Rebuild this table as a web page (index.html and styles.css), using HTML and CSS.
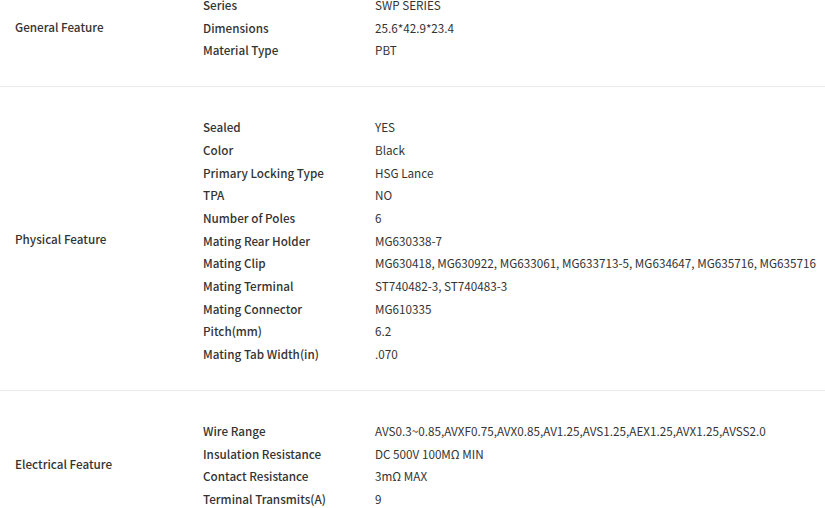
FILE: index.html
```html
<!DOCTYPE html>
<html lang="en">
<head>
    <meta charset="UTF-8">
    <meta name="viewport" content="width=device-width, initial-scale=1.0">
    <title>Product Specifications</title>
    <link rel="stylesheet" href="styles.css">
</head>
<body>
    <div class="specs">
        <div class="group">
            <div class="group-name">General Feature</div>
            <div class="rows">
                <div class="key">Series</div><div class="val">SWP SERIES</div>
                <div class="key">Dimensions</div><div class="val">25.6*42.9*23.4</div>
                <div class="key">Material Type</div><div class="val">PBT</div>
            </div>
        </div>

        <div class="group">
            <div class="group-name">Physical Feature</div>
            <div class="rows">
                <div class="key">Sealed</div><div class="val">YES</div>
                <div class="key">Color</div><div class="val">Black</div>
                <div class="key">Primary Locking Type</div><div class="val">HSG Lance</div>
                <div class="key">TPA</div><div class="val">NO</div>
                <div class="key">Number of Poles</div><div class="val">6</div>
                <div class="key">Mating Rear Holder</div><div class="val">MG630338-7</div>
                <div class="key">Mating Clip</div><div class="val">MG630418, MG630922, MG633061, MG633713-5, MG634647, MG635716, MG635716</div>
                <div class="key">Mating Terminal</div><div class="val">ST740482-3, ST740483-3</div>
                <div class="key">Mating Connector</div><div class="val">MG610335</div>
                <div class="key">Pitch(mm)</div><div class="val">6.2</div>
                <div class="key">Mating Tab Width(in)</div><div class="val">.070</div>
            </div>
        </div>

        <div class="group">
            <div class="group-name">Electrical Feature</div>
            <div class="rows">
                <div class="key">Wire Range</div><div class="val">AVS0.3~0.85,AVXF0.75,AVX0.85,AV1.25,AVS1.25,AEX1.25,AVX1.25,AVSS2.0</div>
                <div class="key">Insulation Resistance</div><div class="val">DC 500V 100MΩ MIN</div>
                <div class="key">Contact Resistance</div><div class="val">3mΩ MAX</div>
                <div class="key">Terminal Transmits(A)</div><div class="val">9</div>
            </div>
        </div>
    </div>
</body>
</html>
```

FILE: styles.css
```css
body {
    font-family: "Noto Sans CJK KR", "Noto Sans", sans-serif;
    font-size: 11.7px;
    margin: 0;
    color: #333;
    background: #fff;
}
.specs {
    margin-top: -35px;
}
.group {
    display: flex;
    align-items: center;
    padding: 29px 0 24px 15px;
    border-bottom: 1px solid #ebebeb;
}
.group-name {
    width: 188px;
    flex-shrink: 0;
    font-weight: 500;
    line-height: 22px;
    padding-bottom: 3px;
}
.rows {
    display: grid;
    grid-template-columns: 172px auto;
    line-height: 22.7px;
}
.key {
    font-weight: 500;
}
.val {
    white-space: nowrap;
}
```
